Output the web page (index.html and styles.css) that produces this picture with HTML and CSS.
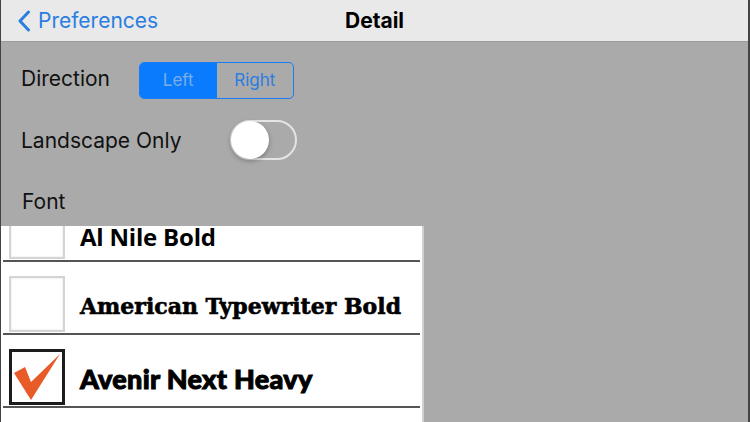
FILE: index.html
```html
<!DOCTYPE html>
<html lang="en">
<head>
    <meta charset="UTF-8">
    <meta name="viewport" content="width=device-width, initial-scale=1.0">
    <title>Detail</title>
    <link rel="stylesheet" href="styles.css">
</head>
<body>
    <div class="screen">
        <header class="navbar">
            <a class="back" href="#">
                <svg class="chevron" width="14" height="22" viewBox="0 0 14 22">
                    <path d="M11.5 2 L3 11 L11.5 20" fill="none" stroke="#2a7de1" stroke-width="3" stroke-linecap="round" stroke-linejoin="round"/>
                </svg>
                <span>Preferences</span>
            </a>
            <h1 class="title">Detail</h1>
        </header>

        <div class="settings">
            <div class="setting-row direction-row">
                <span class="label">Direction</span>
                <div class="segmented">
                    <button class="segment active">Left</button>
                    <button class="segment">Right</button>
                </div>
            </div>

            <div class="setting-row landscape-row">
                <span class="label">Landscape Only</span>
                <div class="switch">
                    <div class="knob"></div>
                </div>
            </div>

            <div class="setting-row font-row">
                <span class="label">Font</span>
            </div>
        </div>

        <div class="font-list">
            <div class="font-list-inner">
                <div class="font-item">
                    <div class="checkbox"></div>
                    <span class="font-name nile">Al Nile Bold</span>
                </div>
                <div class="font-item">
                    <div class="checkbox"></div>
                    <span class="font-name typewriter">American Typewriter Bold</span>
                </div>
                <div class="font-item">
                    <div class="checkbox checked">
                        <svg width="50" height="50" viewBox="0 0 50 50">
                            <path d="M2 21 L13 15 L19 30 L48 2 L19 48 Z" fill="#e85a28"/>
                        </svg>
                    </div>
                    <span class="font-name avenir">Avenir Next Heavy</span>
                </div>
            </div>
        </div>
    </div>
</body>
</html>
```

FILE: styles.css
```css
body {
    margin: 0;
    font-family: 'Inter', 'Roboto', sans-serif;
    background-color: #aaaaaa;
    color: #111;
}

.screen {
    width: 750px;
    height: 422px;
    overflow: hidden;
    box-sizing: border-box;
    border-left: 1px solid #444;
    border-right: 2px solid #444;
    background-color: #aaaaaa;
}

.navbar {
    height: 41px;
    background-color: #e9e9e9;
    border-bottom: 1px solid #9c9c9c;
    display: flex;
    align-items: center;
    justify-content: center;
    position: relative;
}

.back {
    position: absolute;
    left: 16px;
    top: 0;
    height: 41px;
    display: flex;
    align-items: center;
    gap: 7px;
    color: #2a7de1;
    text-decoration: none;
    font-size: 21px;
}

.title {
    margin: 0;
    font-size: 21px;
    font-weight: 700;
    color: #000;
}

.settings {
    padding: 0 0 0 20px;
}

.setting-row {
    display: flex;
    align-items: center;
}

.label {
    font-size: 21px;
    color: #111;
}

.direction-row {
    height: 38px;
    margin-top: 19px;
}

.direction-row .label {
    margin-top: -3px;
}

.segmented {
    display: flex;
    margin-left: 29px;
    width: 155px;
    height: 37px;
    box-sizing: border-box;
    border: 1.5px solid #1a7cf4;
    border-radius: 5px;
    overflow: hidden;
}

.segment {
    flex: 1;
    border: none;
    background: transparent;
    font-family: inherit;
    font-size: 17px;
    color: #2a7de1;
    padding: 0;
}

.segment.active {
    background-color: #0a7bfd;
    color: #7aaee8;
}

.landscape-row {
    height: 42px;
    margin-top: 20px;
}

.switch {
    margin-left: 49px;
    width: 67px;
    height: 40px;
    box-sizing: border-box;
    border: 2px solid #e4e4e4;
    border-radius: 20px;
    position: relative;
}

.knob {
    position: absolute;
    left: -1px;
    top: -1px;
    width: 38px;
    height: 38px;
    border-radius: 50%;
    background-color: #fff;
    box-shadow: 0 2px 5px rgba(0, 0, 0, 0.3);
}

.font-row {
    height: 40px;
    margin-top: 20px;
    padding-left: 1px;
}

.font-list {
    margin-top: 5px;
    width: 421px;
    height: 196px;
    overflow: hidden;
    background-color: #fff;
    border-right: 2px solid #d0d0d0;
}

.font-list-inner {
    margin-top: -37px;
}

.font-item {
    height: 73px;
    box-sizing: border-box;
    margin: 0 2px;
    border-bottom: 2px solid #555;
    display: flex;
    align-items: center;
    padding: 13px 0 0 6px;
    gap: 15px;
}

.checkbox {
    width: 56px;
    height: 56px;
    box-sizing: border-box;
    border: 2px solid #d4d4d4;
    box-shadow: inset 0 0 2px rgba(0, 0, 0, 0.15);
    flex-shrink: 0;
}

.checkbox.checked {
    border: 3px solid #1c1c1c;
    box-shadow: none;
    display: flex;
    align-items: center;
    justify-content: center;
}

.font-name {
    color: #000;
}

.nile {
    font-family: 'Open Sans', sans-serif;
    font-weight: 700;
    font-size: 24px;
    line-height: 1;
    letter-spacing: -0.2px;
    margin-top: 11px;
}

.typewriter {
    font-family: 'DejaVu Serif', serif;
    font-weight: 700;
    font-size: 22px;
    margin-top: 4px;
    -webkit-text-stroke: 0.6px #000;
}

.avenir {
    font-family: 'Lato', sans-serif;
    font-weight: 900;
    font-size: 27px;
    letter-spacing: 0.3px;
    margin-top: 2px;
    -webkit-text-stroke: 1px #000;
}
```
